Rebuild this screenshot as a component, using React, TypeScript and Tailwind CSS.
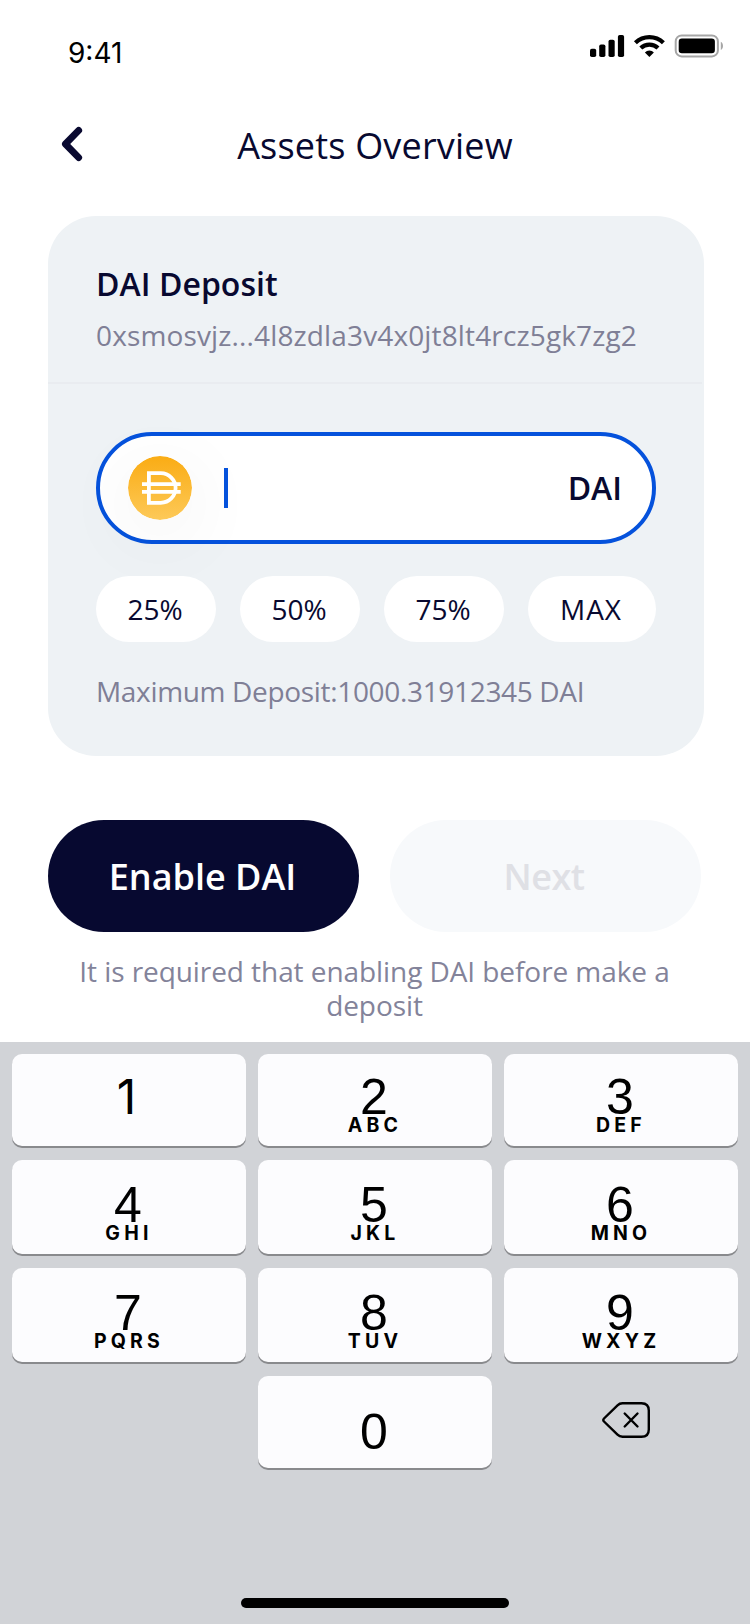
import { clsx } from "clsx";

const PRESETS = ["25%", "50%", "75%"];

const KEY_ROWS = [
  [["1", ""], ["2", "ABC"], ["3", "DEF"]],
  [["4", "GHI"], ["5", "JKL"], ["6", "MNO"]],
  [["7", "PQRS"], ["8", "TUV"], ["9", "WXYZ"]],
];

function StatusBar() {
  return (
    <div className="flex h-28 items-start justify-between pl-[68px] pr-[27px] text-black">
      <span className="mt-[33px] font-['Inter',sans-serif] text-[28px] leading-10">9:41</span>
      <svg className="mt-[33px] h-[26px] w-[136px]" viewBox="0 0 136 26" fill="currentColor">
        <rect x="3" y="15.7" width="6.2" height="8.3" rx="1.8" />
        <rect x="12.2" y="11.4" width="6.2" height="12.6" rx="1.8" />
        <rect x="21.5" y="6.8" width="6.2" height="17.2" rx="1.8" />
        <rect x="30.9" y="2" width="6.2" height="22" rx="1.8" />
        <g fill="none" stroke="currentColor" strokeWidth="4.3">
          <path d="M48.4 9.7 A20.5 20.5 0 0 1 76.4 9.7" />
          <path d="M53.8 15 A12.6 12.6 0 0 1 71 15" />
        </g>
        <path d="M57.9 19.4 A6.3 6.3 0 0 1 66.9 19.4 L62.4 23.9 Z" />
        <rect x="88.7" y="2.4" width="42.2" height="21" rx="6" fill="none" stroke="#a6a6a6" strokeWidth="2" />
        <rect x="91.7" y="5.5" width="36.2" height="14.8" rx="3.2" />
        <path d="M133.8 8.8 C135.4 9.8 136 11.2 136 12.9 C136 14.6 135.4 16 133.8 17 Z" fill="#a6a6a6" />
      </svg>
    </div>
  );
}

function Header() {
  return (
    <header className="grid h-16 grid-cols-[100px_1fr_100px] items-center">
      <button className="pl-[60px]" aria-label="Back">
        <svg className="h-9 w-6" viewBox="0 0 24 36" fill="none" stroke="#090930" strokeWidth="6.8" strokeLinecap="round" strokeLinejoin="round">
          <path d="M18.7 4.4 L5.4 18 L18.7 31.6" />
        </svg>
      </button>
      <h1 className="pt-[3px] text-center text-[36px] leading-[48px] tracking-[0.2px]">Assets Overview</h1>
    </header>
  );
}

function DaiCoin() {
  return (
    <svg className="size-16 rounded-full shadow-[0_16px_80px_rgba(10,10,40,0.07)]" viewBox="0 0 64 64">
      <defs>
        <linearGradient id="coin" x1="0" y1="0" x2="0" y2="1">
          <stop offset="0" stopColor="#faac14" />
          <stop offset="1" stopColor="#fdc958" />
        </linearGradient>
      </defs>
      <circle cx="32" cy="32" r="32" fill="url(#coin)" />
      <g fill="none" stroke="#fff" strokeWidth="3.8">
        <path d="M20.9 17.2 H32.8 A14.8 14.8 0 0 1 32.8 46.8 H20.9 Z" />
        <path d="M14 28.2 H52.7 M14 35.9 H52.7" />
      </g>
    </svg>
  );
}

function DepositCard() {
  return (
    <section className="ml-12 mt-10 h-[540px] w-[656px] rounded-[48px] bg-[#eef2f5]">
      <div className="mr-0.5 border-b-2 border-[#e9ecf0] pb-[30px] pl-12 pt-12">
        <h2 className="text-[32px] font-semibold leading-10 tracking-[0.05px]">DAI Deposit</h2>
        <p className="mt-3.5 whitespace-nowrap text-[28px] leading-[34px] tracking-[0.14px] text-[#7f7f96]">
          0xsmosvjz...4l8zdla3v4x0jt8lt4rcz5gk7zg2
        </p>
      </div>
      <div className="px-12 pt-12">
        <div className="flex h-28 items-center rounded-full border-4 border-[#0552dc] bg-white pl-7 pr-[30px]">
          <DaiCoin />
          <div className="ml-8 h-10 w-1 bg-[#0552dc]" />
          <span className="ml-auto text-[32px] font-semibold leading-10">DAI</span>
        </div>
        <div className="mt-8 grid grid-cols-[120px_120px_120px_128px] gap-6 text-[28px]">
          {PRESETS.map((label) => (
            <button key={label} className="h-[66px] rounded-full bg-white pr-0.5">{label}</button>
          ))}
          <button className="h-[66px] rounded-full bg-white pr-0.5 tracking-[0.9px]">MAX</button>
        </div>
        <p className="mt-8 whitespace-nowrap text-[28px] leading-[34px] tracking-[-0.33px] text-[#7f7f96]">
          Maximum Deposit:1000.31912345 DAI
        </p>
      </div>
    </section>
  );
}

function Actions() {
  return (
    <div className="mt-16 px-12">
      <div className="flex gap-[31px] text-[36px] font-semibold">
        <button className="h-28 w-[311px] rounded-full bg-[#070930] pr-0.5 pt-0.5 text-white">Enable DAI</button>
        <button className="h-28 w-[311px] rounded-full bg-[#f7f9fb] pr-[3px] pt-0.5 tracking-[-0.5px] text-[#dfe0e5]">Next</button>
      </div>
      <p className="-ml-px mt-[22px] h-[88px] text-center text-[28px] leading-[34px] tracking-[-0.07px] text-[#83839a]">
        It is required that enabling DAI before make a
        <br />
        deposit
      </p>
    </div>
  );
}

const KEY = "flex flex-col items-center rounded-[10px] bg-[#fcfcfe] pr-0.5 shadow-[0_2px_0_#898a8d]";

function Keyboard() {
  return (
    <div className="flex h-[582px] flex-col bg-[#d1d3d7] px-3 pt-3 text-black">
      <div className="grid grid-cols-3 grid-rows-[92px_94px_94px_92px] gap-x-3 gap-y-3.5">
        {KEY_ROWS.map((row, r) =>
          row.map(([digit, letters]) => (
            <button key={digit} className={clsx(KEY, r === 0 ? "pt-[25px]" : "pt-[27px]")}>
              <span
                className={clsx(
                  "leading-9",
                  digit === "1" ? "pr-[3px] font-['Inter',sans-serif] text-[48px]" : "font-['Liberation_Sans',sans-serif] text-[50px]",
                )}
              >
                {digit}
              </span>
              {letters && (
                <span className="pl-0.5 font-['Inter',sans-serif] text-[19.5px] font-bold leading-5 tracking-[4.2px]">
                  {letters}
                </span>
              )}
            </button>
          )),
        )}
        <div />
        <button className={clsx(KEY, "pt-[38px]")}>
          <span className="font-['Liberation_Sans',sans-serif] text-[50px] leading-9">0</span>
        </button>
        <button className="flex justify-center pl-2.5 pt-[26px]" aria-label="Delete">
          <svg className="h-9 w-12" viewBox="0 0 48 36" fill="none" stroke="#000" strokeWidth="2.4" strokeLinecap="round" strokeLinejoin="round">
            <path d="M20.5 1.3 H39.5 Q46.8 1.3 46.8 8.6 V27.4 Q46.8 34.7 39.5 34.7 H20.5 Q17.5 34.7 15.5 32.7 L2 19.5 Q0.6 18 2 16.5 L15.5 3.3 Q17.5 1.3 20.5 1.3 Z" />
            <path d="M22.7 11.5 L35.5 24.5 M35.5 11.5 L22.7 24.5" />
          </svg>
        </button>
      </div>
      <div className="mx-auto mb-4 mt-auto h-2.5 w-[268px] rounded-full bg-black" />
    </div>
  );
}

export default function App() {
  return (
    <main className="flex h-[1624px] w-[750px] flex-col overflow-hidden bg-white font-['Open_Sans',sans-serif] text-[#080930]">
      <StatusBar />
      <Header />
      <DepositCard />
      <Actions />
      <Keyboard />
    </main>
  );
}
